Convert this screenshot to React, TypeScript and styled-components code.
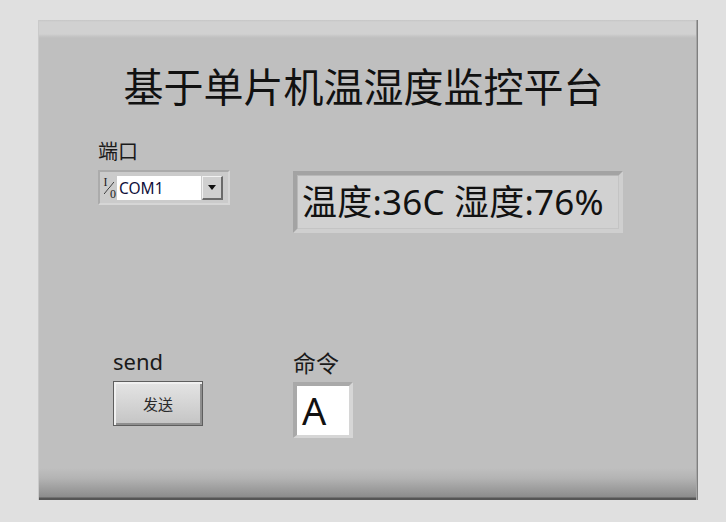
import React from 'react';
import styled, { createGlobalStyle } from 'styled-components';

const GlobalStyle = createGlobalStyle`
  html, body {
    margin: 0;
    padding: 0;
    background: #e0e0e0;
  }
  body {
    font-family: "Noto Sans", "Noto Sans CJK SC", sans-serif;
    color: #111;
  }
`;

const Page = styled.div`
  width: 726px;
  height: 522px;
  padding: 20px 0 0 38px;
  box-sizing: border-box;
`;

// LabVIEW style front panel with a light top band and a dark bottom bevel
const Panel = styled.div`
  width: 660px;
  height: 480px;
  box-sizing: border-box;
  border-right: 1px solid #7f7f7f;
  box-shadow: inset -1px 0 0 #a6a6a6, inset 1px 0 0 #cacaca;
  background: linear-gradient(
    to bottom,
    #c6c6c6 0,
    #d1d1d1 2px,
    #d1d1d1 14px,
    #c6c6c6 16px,
    #bfbfbf 18px,
    #bfbfbf calc(100% - 32px),
    #b4b4b4 calc(100% - 22px),
    #8c8c8c calc(100% - 3px),
    #555 calc(100% - 2px),
    #555 100%
  );
  padding: 41px 0 0 60px;
`;

const Title = styled.h1`
  margin: 0 0 31px -68px;
  font-family: "Noto Sans CJK SC", sans-serif;
  font-weight: 400;
  font-size: 40px;
  line-height: 48px;
  text-align: center;
  color: #111;
`;

const Controls = styled.div`
  display: grid;
  grid-template-columns: 195px auto;
  row-gap: 115px;
  align-items: start;
`;

const Stack = styled.div<{ $indent?: number; $top?: number }>`
  display: flex;
  flex-direction: column;
  align-items: flex-start;
  padding-left: ${(p) => p.$indent ?? 0}px;
  margin-top: ${(p) => p.$top ?? 0}px;
`;

const Label = styled.div<{ $size: number; $gap: number }>`
  font-family: "Noto Sans", "Noto Sans CJK SC", sans-serif;
  font-size: ${(p) => p.$size}px;
  line-height: ${(p) => p.$size + 4}px;
  margin-bottom: ${(p) => p.$gap}px;
  color: #1a1a1a;
`;

const Combo = styled.div`
  display: flex;
  align-items: center;
  width: 132px;
  height: 35px;
  box-sizing: border-box;
  background: #cbcbcb;
  border-top: 2px solid #ababab;
  border-left: 2px solid #ababab;
  border-bottom: 2px solid #d6d6d6;
  border-right: 2px solid #d6d6d6;
  padding: 3px 5px 3px 1px;
`;

// the little I/O mark of a VISA resource name control
const IoGlyph = styled.span`
  width: 16px;
  height: 24px;
  display: grid;
  grid-template-columns: 8px 8px;
  grid-template-rows: 12px 12px;
  font-family: "Liberation Serif", serif;
  font-size: 12px;
  line-height: 12px;
  color: #222;
  background: linear-gradient(
    to bottom right,
    transparent calc(50% - 0.7px),
    #333 50%,
    transparent calc(50% + 0.7px)
  ) 3px 6px / 10px 12px no-repeat;
`;

const IoTop = styled.span`
  grid-column: 1;
  grid-row: 1;
  text-align: center;
  padding-left: 1px;
`;

const IoBottom = styled.span`
  grid-column: 2;
  grid-row: 2;
  text-align: center;
`;

const ComboField = styled.div`
  flex: 1;
  height: 24px;
  background: #fff;
  font-size: 15.5px;
  line-height: 24px;
  padding-left: 2px;
  color: #10103a;
`;

const ComboArrow = styled.div`
  width: 21px;
  height: 24px;
  box-sizing: border-box;
  margin-left: 1px;
  background: #d0d0d0;
  border-top: 1px solid #f2f2f2;
  border-left: 1px solid #f2f2f2;
  border-bottom: 2px solid #6a6a6a;
  border-right: 2px solid #6a6a6a;
  display: flex;
  align-items: center;
  justify-content: center;
  &::after {
    content: '';
    border-left: 4px solid transparent;
    border-right: 4px solid transparent;
    border-top: 5px solid #111;
  }
`;

const Display = styled.div`
  width: 330px;
  height: 62px;
  box-sizing: border-box;
  margin-top: 31px;
  background: #d1d1d1;
  border-top: 4px solid #a3a3a3;
  border-left: 4px solid #a3a3a3;
  border-bottom: 4px solid #cfcfcf;
  border-right: 4px solid #cfcfcf;
  box-shadow: inset 1px 1px 0 #b8b8b8, inset -1px -1px 0 #c4c4c4;
  padding-left: 5px;
  font-family: "Noto Sans", "Noto Sans CJK SC", sans-serif;
  font-size: 35px;
  line-height: 54px;
  letter-spacing: 0.2px;
  white-space: nowrap;
  color: #111;
`;

const SendButton = styled.button`
  width: 90px;
  height: 45px;
  box-sizing: border-box;
  border: 1px solid #5e5e5e;
  border-radius: 0;
  background: linear-gradient(to bottom, #e4e4e4 0%, #d6d6d6 45%, #c4c4c4 100%);
  box-shadow: inset 2px 2px 0 #f0f0f0, inset -2px -2px 0 #8e8e8e;
  font-family: "Noto Sans CJK SC", sans-serif;
  font-size: 15px;
  color: #2a2a2a;
  padding: 0;
`;

const CommandBox = styled.div`
  width: 60px;
  height: 56px;
  box-sizing: border-box;
  background: #fff;
  border-top: 4px solid #a9a9a9;
  border-left: 4px solid #a9a9a9;
  border-bottom: 3px solid #d6d6d6;
  border-right: 4px solid #d6d6d6;
  padding-left: 5px;
  font-size: 38px;
  line-height: 48px;
  color: #111;
`;

export default function App() {
  return (
    <>
      <GlobalStyle />
      <Page>
        <Panel>
          <Title>基于单片机温湿度监控平台</Title>
          <Controls>
            <Stack>
              <Label $size={20} $gap={6}>端口</Label>
              <Combo>
                <IoGlyph>
                  <IoTop>I</IoTop>
                  <IoBottom>0</IoBottom>
                </IoGlyph>
                <ComboField>COM1</ComboField>
                <ComboArrow />
              </Combo>
            </Stack>
            <Display>温度:36C 湿度:76%</Display>
            <Stack $indent={15}>
              <Label $size={22} $gap={7}>send</Label>
              <SendButton>发送</SendButton>
            </Stack>
            <Stack $top={2}>
              <Label $size={23} $gap={5}>命令</Label>
              <CommandBox>A</CommandBox>
            </Stack>
          </Controls>
        </Panel>
      </Page>
    </>
  );
}
